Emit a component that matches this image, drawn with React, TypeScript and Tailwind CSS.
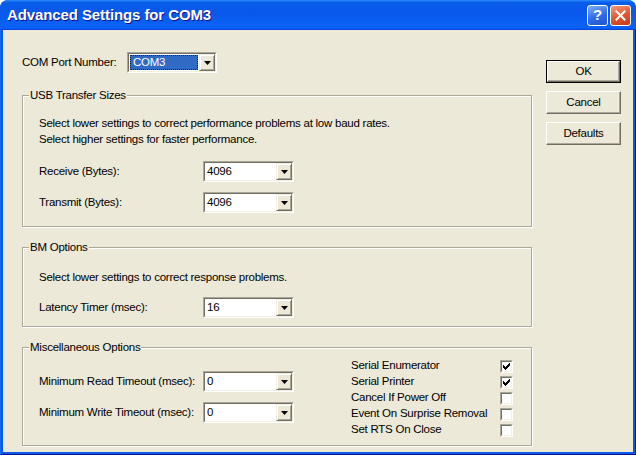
import React from 'react';

const FONT = "font-['Liberation_Sans',Arial,sans-serif]";

const Arrow: React.FC = () => (
  <div className="w-[16px] h-full border border-t-[#F1EFE2] border-l-[#F1EFE2] border-b-[#716F64] border-r-[#716F64] bg-[#ECE9D8] shadow-[inset_1px_1px_0_#fff,inset_-1px_-1px_0_#ACA899] flex items-center justify-center">
    <svg width="7" height="4" viewBox="0 0 7 4">
      <polygon points="0,0 7,0 3.5,4" fill="#000" />
    </svg>
  </div>
);

const Combo: React.FC<{ value: string; selected?: boolean; w?: string }> = ({ value, selected, w = 'w-[91px]' }) => (
  <div className={`${w} h-[21px] shrink-0 border border-t-[#ACA899] border-l-[#ACA899] border-b-white border-r-white`}>
    <div className="w-full h-full flex border border-t-[#716F64] border-l-[#716F64] border-b-[#F1EFE2] border-r-[#F1EFE2] bg-white">
      {selected ? (
        <div className="flex-1 m-[1px] flex items-center pl-[2px] bg-[#316AC5] text-white border border-dotted border-[#222]">{value}</div>
      ) : (
        <div className="flex-1 flex items-center pl-[2px]">{value}</div>
      )}
      <Arrow />
    </div>
  </div>
);

const Check: React.FC<{ on?: boolean }> = ({ on }) => (
  <div className="w-[13px] h-[13px] shrink-0 border border-t-[#ACA899] border-l-[#ACA899] border-b-white border-r-white">
    <div className="w-full h-full border border-t-[#716F64] border-l-[#716F64] border-b-[#F1EFE2] border-r-[#F1EFE2] bg-white flex items-center justify-center">
      {on && (
        <svg width="7" height="7" viewBox="0 0 7 7" shapeRendering="crispEdges">
          <path d="M0 2h1v3H0zM1 3h1v3H1zM2 4h1v3H2zM3 3h1v3H3zM4 2h1v3H4zM5 1h1v3H5zM6 0h1v3H6z" fill="#000" />
        </svg>
      )}
    </div>
  </div>
);

const Group: React.FC<{ title: string; h: string; mt: string; children: React.ReactNode }> = ({ title, h, mt, children }) => (
  <div className={`${h} ${mt} border border-[#ACA899] shadow-[inset_1px_1px_0_#fff,1px_1px_0_#fff] flex flex-col`}>
    <div className="-mt-[8px] ml-[6px] px-[1px] w-fit h-[14px] leading-[14px] bg-[#ECE9D8]">{title}</div>
    {children}
  </div>
);

const Row: React.FC<{ label: string; value: string; mt: string }> = ({ label, value, mt }) => (
  <div className={`flex items-center ${mt}`}>
    <div className="w-[164px] whitespace-nowrap">{label}</div>
    <Combo value={value} />
  </div>
);

const Btn: React.FC<{ label: string; def?: boolean }> = ({ label, def }) => {
  const face = (
    <div className="w-full h-full flex items-center justify-center border border-t-white border-l-white border-b-[#716F64] border-r-[#716F64] shadow-[inset_-1px_-1px_0_#ACA899] bg-[#ECE9D8]">
      {label}
    </div>
  );
  return def ? <div className="w-[75px] h-[23px] border border-black">{face}</div> : <div className="w-[75px] h-[23px]">{face}</div>;
};

export default function App() {
  const checks = [
    { label: 'Serial Enumerator', on: true },
    { label: 'Serial Printer', on: true },
    { label: 'Cancel If Power Off', on: false },
    { label: 'Event On Surprise Removal', on: false },
    { label: 'Set RTS On Close', on: false },
  ];

  return (
    <div className={`w-[636px] h-[455px] flex flex-col rounded-t-[8px] overflow-hidden bg-[#0855DD] ${FONT} text-[11.5px] tracking-[-0.25px] text-black`}>
      {/* title bar */}
      <div className="h-[30px] flex items-center justify-between pl-[7px] pr-[5px] bg-[linear-gradient(180deg,#2a8cf8,#0a5ceb_8%,#0858ea_40%,#0a62f5_88%,#0a62f5_93%,#005bff_95%,#0a45d6_96%,#0a45d6)]">
        <span className="font-bold text-[15px] text-white tracking-[-0.1px] [text-shadow:1px_1px_#0f1089]">
          Advanced Settings for COM3
        </span>
        <div className="flex gap-[2px]">
          <div className="w-[21px] h-[21px] rounded-[3px] border border-white bg-[linear-gradient(160deg,#7FAEF8,#2E6BE5_55%,#1F55D0)] flex items-center justify-center text-white font-bold text-[15px] tracking-normal">
            ?
          </div>
          <div className="w-[21px] h-[21px] rounded-[3px] border border-white bg-[linear-gradient(160deg,#F29A7E,#E0552F_55%,#C43B17)] flex items-center justify-center">
            <svg width="11" height="11" viewBox="0 0 11 11">
              <path d="M1.5 1.5L9.5 9.5M9.5 1.5L1.5 9.5" stroke="#fff" strokeWidth="2" strokeLinecap="square" />
            </svg>
          </div>
        </div>
      </div>

      {/* frame + client */}
      <div className="flex-1 flex px-[3px] pb-[3px] bg-[#0B5AE6] shadow-[inset_1px_0_0_#166aee,inset_-1px_0_0_#00138c,inset_0_-1px_0_#00138c]">
        <div className="flex-1 flex bg-[#ECE9D8]">
          <div className="pl-[19px] w-[529px] pt-[22px] flex flex-col">
            <div className="flex items-center">
              <div className="w-[105px] whitespace-nowrap">COM Port Number:</div>
              <Combo value="COM3" selected w="w-[90px]" />
            </div>

            <Group title="USB Transfer Sizes" h="h-[132px]" mt="mt-[22px]">
              <div className="pl-[16px] flex flex-col">
                <div className="mt-[13px] leading-[16px] whitespace-nowrap">
                  Select lower settings to correct performance problems at low baud rates.
                  <br />
                  Select higher settings for faster performance.
                </div>
                <Row label="Receive (Bytes):" value="4096" mt="mt-[14px]" />
                <Row label="Transmit (Bytes):" value="4096" mt="mt-[10px]" />
              </div>
            </Group>

            <Group title="BM Options" h="h-[80px]" mt="mt-[20px]">
              <div className="pl-[16px] flex flex-col">
                <div className="mt-[15px] leading-[16px] whitespace-nowrap">Select lower settings to correct response problems.</div>
                <Row label="Latency Timer (msec):" value="16" mt="mt-[12px]" />
              </div>
            </Group>

            <Group title="Miscellaneous Options" h="h-[99px]" mt="mt-[20px]">
              <div className="pl-[16px] flex items-start">
                <div className="flex flex-col mt-[17px]">
                  <Row label="Minimum Read Timeout (msec):" value="0" mt="" />
                  <Row label="Minimum Write Timeout (msec):" value="0" mt="mt-[10px]" />
                </div>
                <div className="ml-[57px] mt-[4px] flex flex-col">
                  {checks.map(c => (
                    <div key={c.label} className="h-[16px] flex items-center">
                      <div className="w-[149px] whitespace-nowrap">{c.label}</div>
                      <Check on={c.on} />
                    </div>
                  ))}
                </div>
              </div>
            </Group>
          </div>

          <div className="ml-[14px] pt-[30px] flex flex-col gap-[8px]">
            <Btn label="OK" def />
            <Btn label="Cancel" />
            <Btn label="Defaults" />
          </div>
        </div>
      </div>
    </div>
  );
}
